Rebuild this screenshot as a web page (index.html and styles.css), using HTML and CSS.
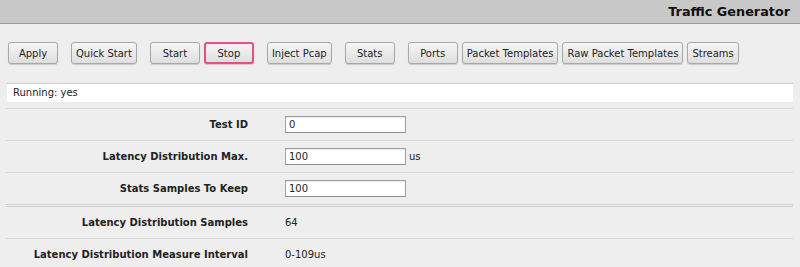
FILE: index.html
```html
<!DOCTYPE html>
<html lang="en">
  <head>
    <meta charset="UTF-8" />
    <title>Traffic Generator</title>
    <link rel="stylesheet" href="styles.css">
  </head>
  <body>
    <div class="header">Traffic Generator</div>

    <div class="toolbar">
      <div class="group"><button class="btn">Apply</button></div>
      <div class="group"><button class="btn">Quick Start</button></div>
      <div class="group">
        <button class="btn">Start</button>
        <button class="btn active">Stop</button>
      </div>
      <div class="group"><button class="btn">Inject Pcap</button></div>
      <div class="group"><button class="btn">Stats</button></div>
      <div class="group">
        <button class="btn">Ports</button>
        <button class="btn">Packet Templates</button>
        <button class="btn">Raw Packet Templates</button>
        <button class="btn">Streams</button>
      </div>
    </div>

    <div class="status">Running: yes</div>

    <div class="form">
      <div class="row">
        <label>Test ID</label>
        <div class="field"><input type="text" value="0" /></div>
      </div>
      <div class="row">
        <label>Latency Distribution Max.</label>
        <div class="field"><input type="text" value="100" /><span class="unit">us</span></div>
      </div>
      <div class="row">
        <label>Stats Samples To Keep</label>
        <div class="field"><input type="text" value="100" /></div>
      </div>
      <div class="row split">
        <label>Latency Distribution Samples</label>
        <div class="field">64</div>
      </div>
      <div class="row">
        <label>Latency Distribution Measure Interval</label>
        <div class="field">0-109us</div>
      </div>
    </div>
  </body>
</html>
```

FILE: styles.css
```css
body {
  margin: 0;
  background: #eeeeee;
  font-family: "DejaVu Sans", Verdana, sans-serif;
  font-size: 10px;
  color: #222;
}
.header {
  height: 23px;
  background: #c8c8c8;
  border-bottom: 1px solid #9a9a9a;
  text-align: right;
  padding-right: 10px;
  font-size: 12.8px;
  font-weight: bold;
  line-height: 24px;
  color: #111;
}
.toolbar {
  display: flex;
  gap: 13px;
  padding: 18px 8px 0 8px;
  height: 22px;
}
.group {
  display: flex;
  gap: 4px;
}
.btn {
  height: 22px;
  min-width: 50px;
  padding: 0 4px;
  font-family: inherit;
  font-size: 10px;
  color: #222;
  background: linear-gradient(#f6f6f6, #dedede);
  border: 1px solid #a8a8a8;
  border-radius: 3px;
  box-shadow: 0 1px 1px rgba(0, 0, 0, 0.15);
}
.btn.active {
  border: 2px solid #ef4b7f;
}
.status {
  margin: 19px 7px 0 7px;
  height: 18px;
  line-height: 18px;
  padding-left: 6px;
  background: #fff;
  border-top: 1px solid #cfcfcf;
}
.form {
  margin: 6px 7px 0 6px;
}
.row {
  display: flex;
  align-items: center;
  height: 31px;
  border-top: 1px solid #dadada;
}
.row.split {
  border-top: 3px double #cfcfcf;
}
.row label {
  width: 242px;
  text-align: right;
  font-weight: bold;
  padding-right: 37px;
}
.field {
  display: flex;
  align-items: center;
}
.field input {
  width: 113px;
  height: 13px;
  padding: 1px 3px;
  font-family: inherit;
  font-size: 10px;
  color: #222;
  border: 1px solid #a0a0a0;
  border-bottom-color: #8f8f8f;
  background: #fff;
  box-shadow: inset 0 1px 1px rgba(0, 0, 0, 0.1);
}
.unit {
  margin-left: 3px;
}
```
